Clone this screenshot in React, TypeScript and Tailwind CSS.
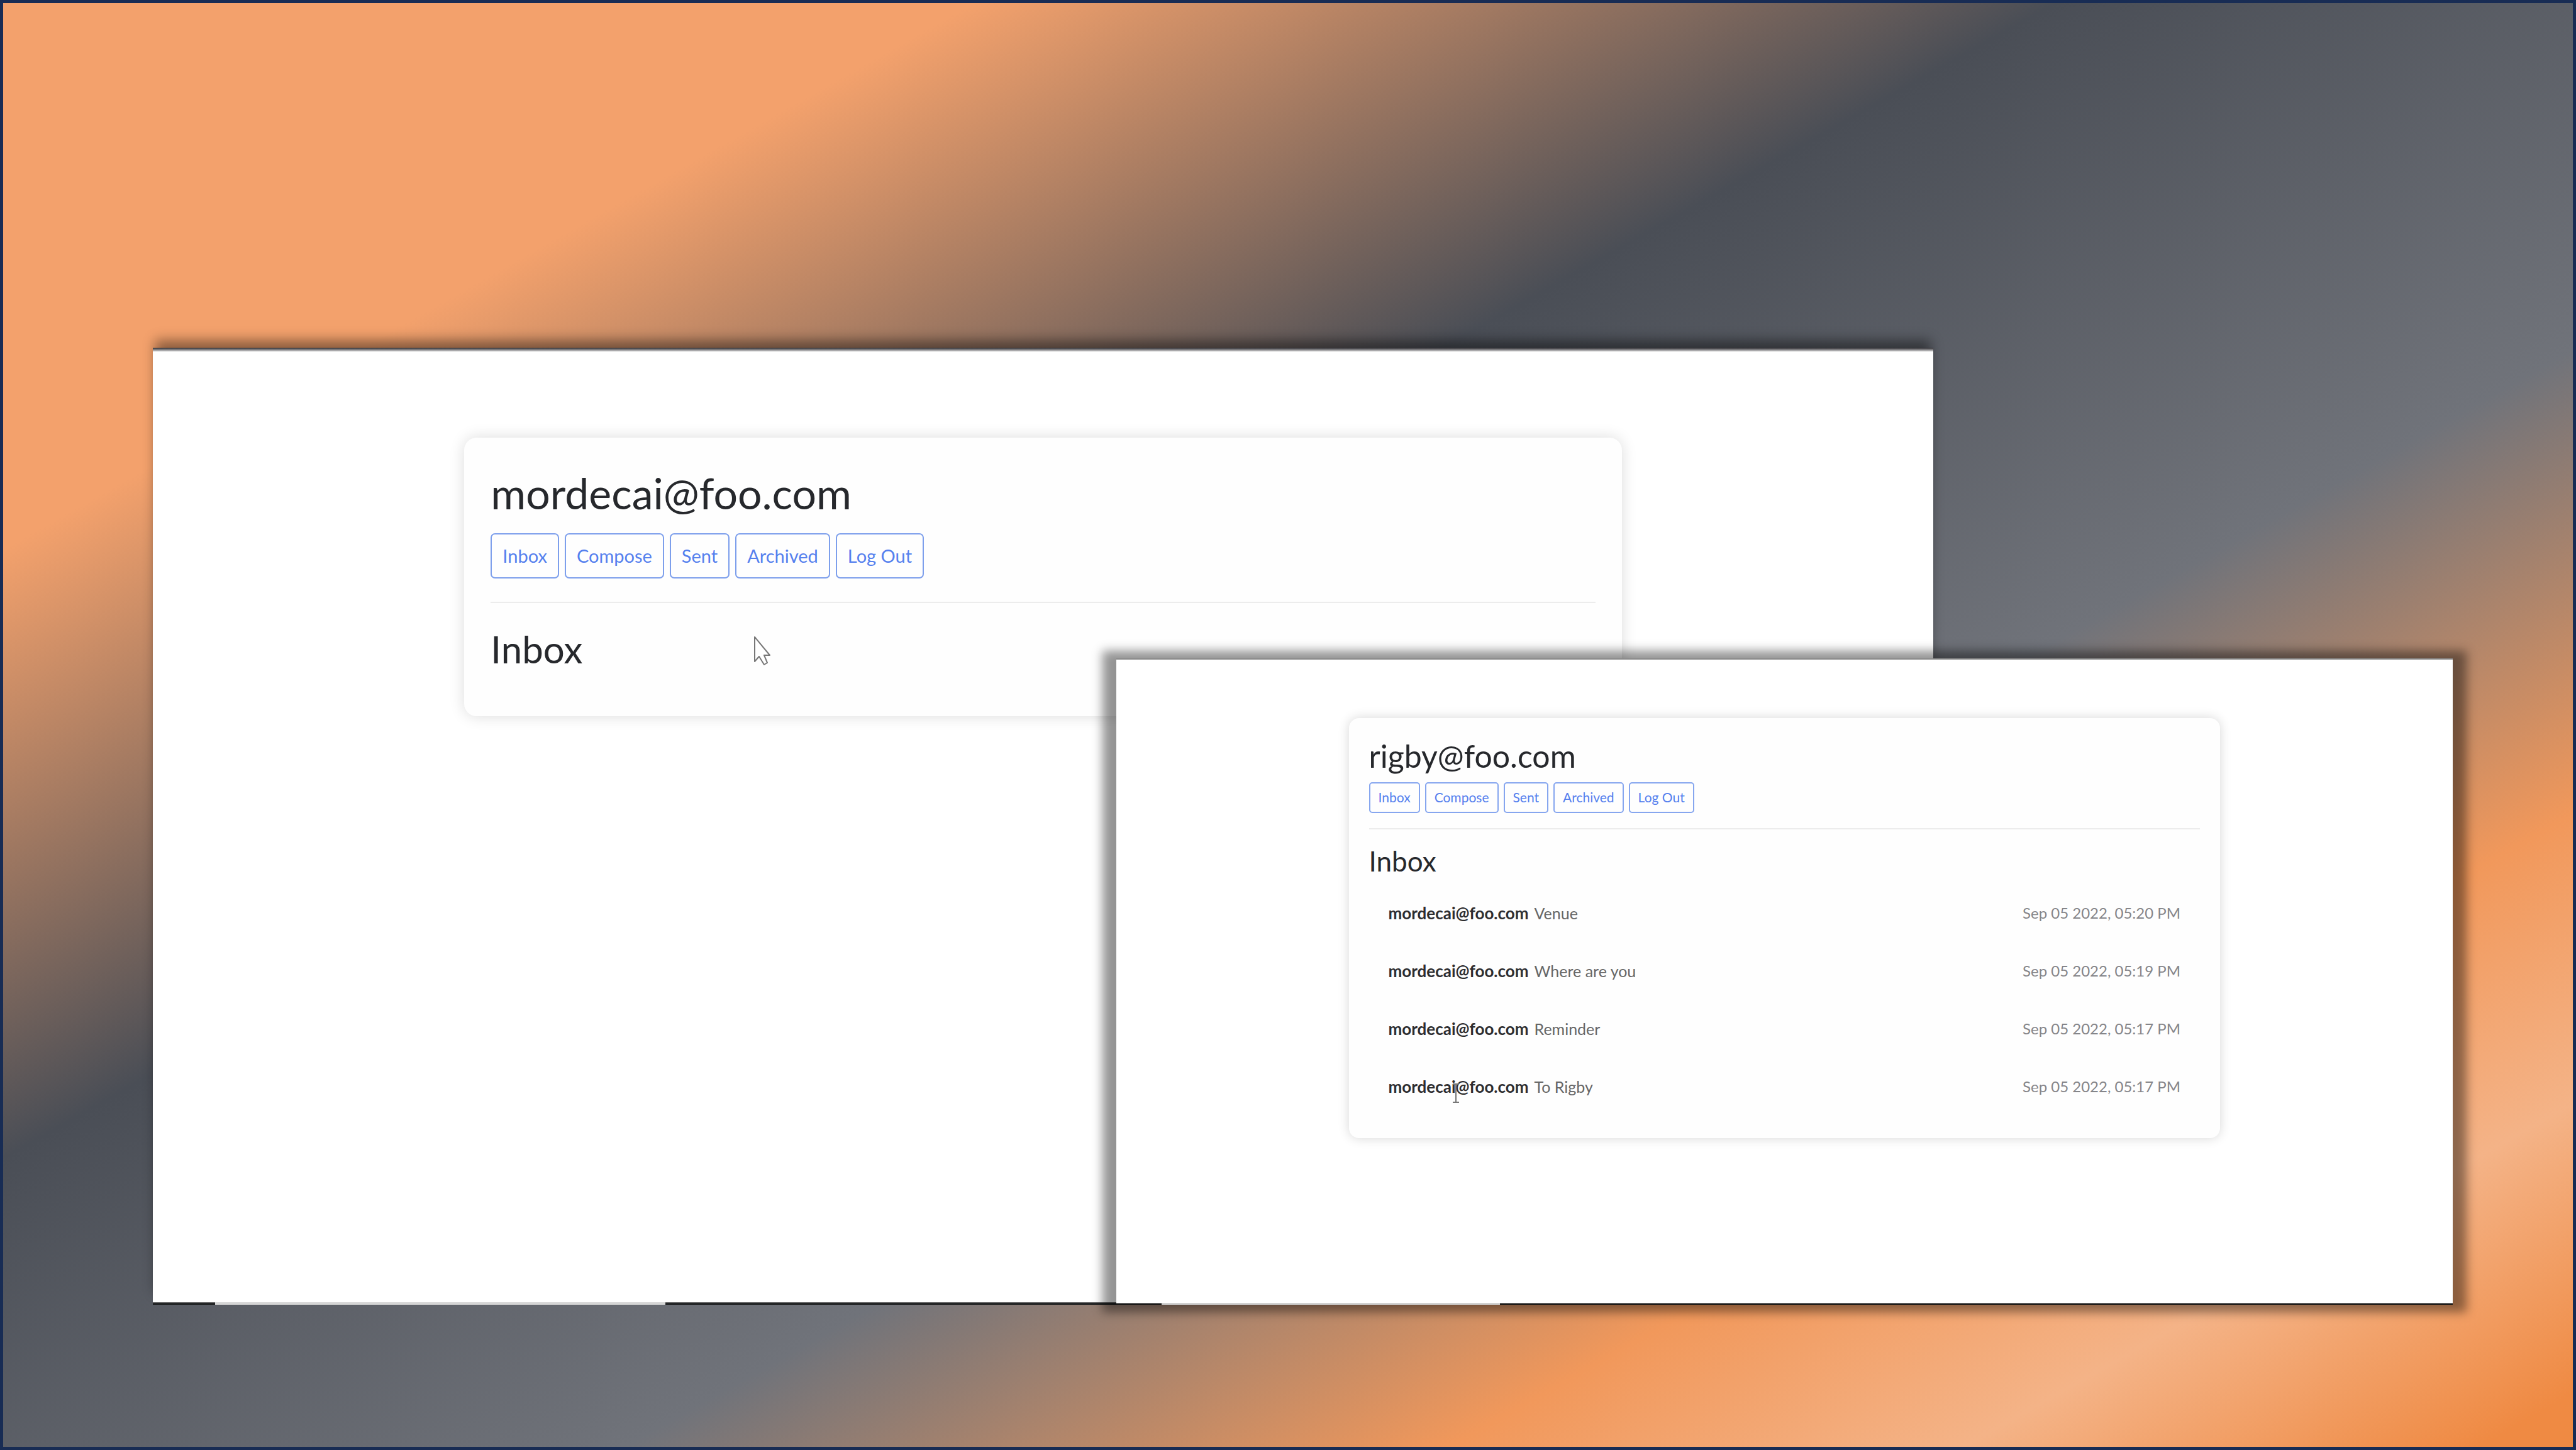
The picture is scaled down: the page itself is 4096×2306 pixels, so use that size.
import React from "react";

type Mail = { sender: string; subject: string; time: string };

const FOLDERS = ["Inbox", "Compose", "Sent", "Archived", "Log Out"];

const MAILS: Mail[] = [
  { sender: "mordecai@foo.com", subject: "Venue", time: "Sep 05 2022, 05:20 PM" },
  { sender: "mordecai@foo.com", subject: "Where are you", time: "Sep 05 2022, 05:19 PM" },
  { sender: "mordecai@foo.com", subject: "Reminder", time: "Sep 05 2022, 05:17 PM" },
  { sender: "mordecai@foo.com", subject: "To Rigby", time: "Sep 05 2022, 05:17 PM" },
];

function ArrowCursor() {
  return (
    <svg
      className="absolute left-[25%] top-[71%] h-[48px] w-[28px]"
      viewBox="0 0 28 48"
      fill="#fff"
      stroke="#777"
      strokeWidth="2"
      strokeLinejoin="round"
      aria-hidden="true"
    >
      <path d="M2 2 V41 L9 33 L17 46 L22 43 L17 31 H26 Z" />
    </svg>
  );
}

function TextCursor() {
  return (
    <svg
      className="absolute left-[10%] top-[45%] h-[32px] w-[12px]"
      viewBox="0 0 12 32"
      fill="none"
      stroke="#777"
      strokeWidth="2"
      aria-hidden="true"
    >
      <path d="M1 1 H11 M6 1 V30 M1 30 H11" />
    </svg>
  );
}

function LargeInbox() {
  return (
    <section className="absolute left-[5.93%] top-[24%] flex h-[66%] w-[69.12%] flex-col bg-white shadow-[0_-16px_18px_-4px_rgba(0,0,0,0.42)]">
      <div className="h-[6px] bg-linear-to-b from-[#2c2b30] to-[#dddddd]" />
      <div className="flex-1 pt-[137px]">
        <div className="relative mx-auto w-[65%] rounded-[20px] bg-[#fefefe] px-[42px] pb-[63px] pt-[44px] shadow-[0_0_24px_rgba(0,0,0,0.14)]">
          <h2 className="text-[68px] leading-[88px]">mordecai@foo.com</h2>
          <nav className="mt-[20px] flex gap-[9px]">
            {FOLDERS.map((name) => (
              <button
                key={name}
                type="button"
                className="h-[72px] rounded-[7px] border-2 border-[#7d9fec] px-[17px] text-[29px] leading-[40px] text-[#5580ee]"
              >
                {name}
              </button>
            ))}
          </nav>
          <hr className="mt-[37px] border-t-2 border-[#ececec]" />
          <h3 className="mt-[29px] text-[60px] leading-[88px]">Inbox</h3>
          <ArrowCursor />
        </div>
      </div>
      <div className="h-[4px] bg-linear-to-b from-[#777777] to-[#1a1c1d] to-50%">
        <div className="ml-[3.5%] h-full w-[25.3%] bg-[#d6d6d6]" />
      </div>
    </section>
  );
}

function SmallInbox() {
  return (
    <section className="absolute left-[43.33%] top-[45.4%] h-[44.6%] w-[51.88%]">
      <div className="absolute -inset-x-[22px] -inset-y-[12px] bg-black/42 blur-[8px]" />
      <div className="relative flex h-full flex-col bg-white">
        <div className="h-[2px] bg-[#8a8a8a]" />
        <div className="flex-1 pt-[93px]">
          <div className="mx-auto w-[65.2%] rounded-[16px] bg-[#fefefe] px-[32px] pb-[36px] pt-[30px] shadow-[0_0_18px_rgba(0,0,0,0.16)]">
            <h2 className="text-[50px] leading-[60px]">rigby@foo.com</h2>
            <nav className="mt-[12px] flex gap-[8px]">
              {FOLDERS.map((name) => (
                <button
                  key={name}
                  type="button"
                  className="h-[49px] rounded-[5px] border-2 border-[#86a6ef] px-[13px] text-[21px] leading-[28px] text-[#5580ee]"
                >
                  {name}
                </button>
              ))}
            </nav>
            <hr className="mt-[24px] border-t-2 border-[#ececec]" />
            <h3 className="mt-[20px] text-[44px] leading-[60px]">Inbox</h3>
            <ul className="mt-[7px]">
              {MAILS.map((mail, index) => (
                <li
                  key={mail.subject + mail.time}
                  className="relative flex h-[92px] items-center justify-between px-[31px] text-[25px] leading-[34px]"
                >
                  <p className="flex items-baseline gap-[9px] text-[#666666]">
                    <strong className="text-[26px] font-bold text-[#2d2d30]">{mail.sender}</strong>
                    {mail.subject}
                  </p>
                  <time className="text-[24px] text-[#858589]">{mail.time}</time>
                  {index === MAILS.length - 1 && <TextCursor />}
                </li>
              ))}
            </ul>
          </div>
        </div>
        <div className="h-[3px] bg-linear-to-b from-[#999999] to-[#141414] to-70%">
          <div className="ml-[3.4%] h-full w-[25.3%] bg-[#d0d0d0]" />
        </div>
      </div>
    </section>
  );
}

export default function App() {
  return (
    <main className="relative h-screen w-full overflow-hidden bg-[linear-gradient(to_bottom_right,#f3a16c_0%,#f3a16c_19%,#4a4e56_40%,#70737a_62%,#f1985b_78%,#f4b387_88%,#ef8a43_98%)] font-['Lato',sans-serif] text-[#26282c]">
      <LargeInbox />
      <SmallInbox />
      <div className="pointer-events-none absolute inset-0 border-[5px] border-[#182c54]" />
    </main>
  );
}
